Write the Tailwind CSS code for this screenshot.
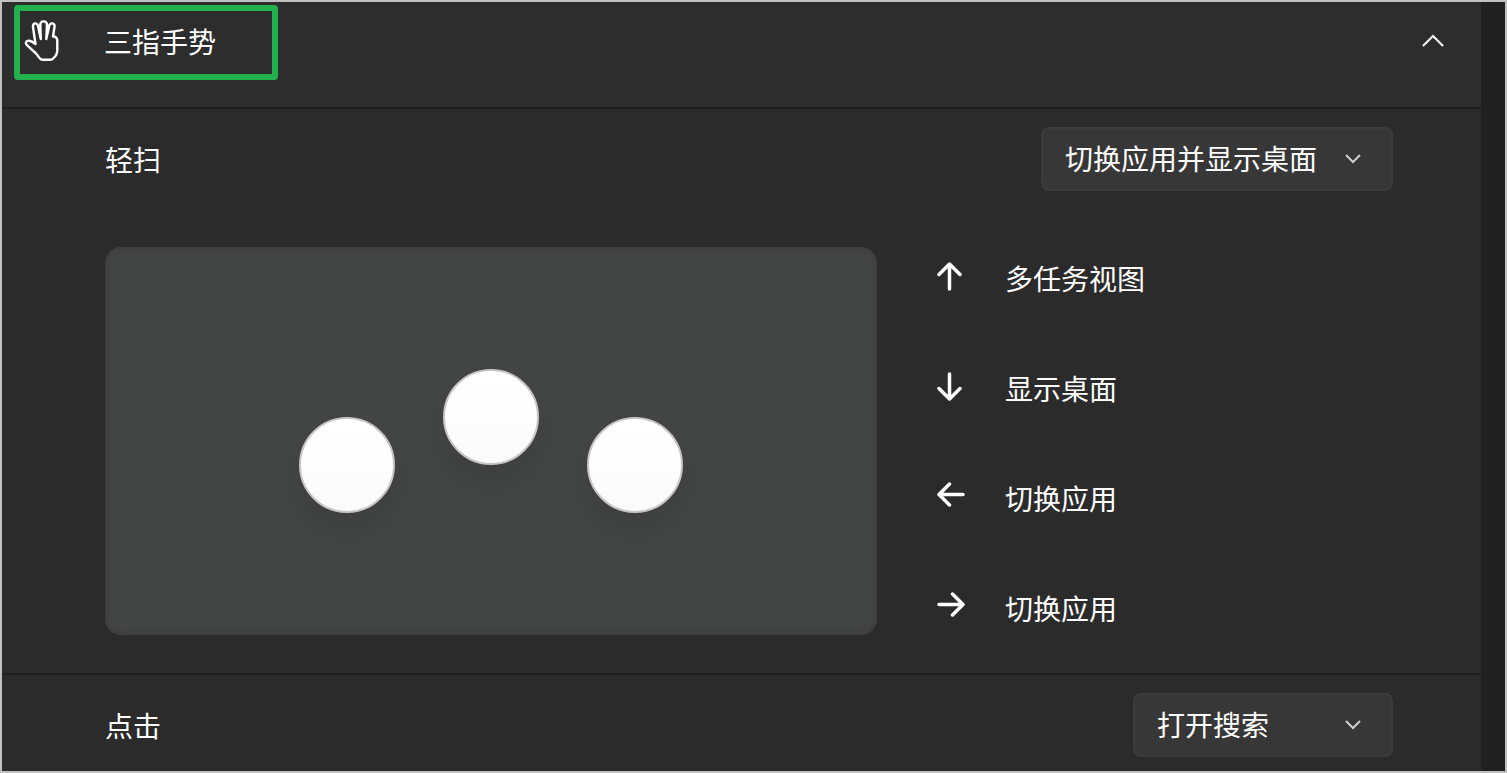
<!DOCTYPE html>
<html lang="zh-CN">
<head>
    <meta charset="UTF-8">
    <meta name="viewport" content="width=device-width, initial-scale=1.0">
    <title>三指手势</title>
    <script src="https://cdn.jsdelivr.net/npm/@tailwindcss/browser@4"></script>
</head>
<body class="bg-[#202020]">
    <div class="min-h-screen flex border-2 border-[#c0c0c0] bg-[#202020] pr-6 text-white text-[28px] leading-10 font-['Noto_Sans_CJK_SC',sans-serif]">
        <main class="flex-1 min-w-0 bg-[#2b2b2b]">
            <!-- Encabezado plegable -->
            <header class="border-b-2 border-[#1f1f1f] bg-[#2d2d2d]">
                <button type="button" aria-expanded="true" class="w-full h-[105px] pt-[3px] pl-3 pr-9 flex items-start justify-between text-left">
                    <span class="w-[264px] h-[75px] pl-1 pb-1 flex items-center gap-11 rounded-sm border-6 border-[#22b14c]">
                        <svg class="w-9 h-11 shrink-0" viewBox="0 0 36 44" fill="none" stroke="currentColor" stroke-width="2.4" stroke-linecap="round" stroke-linejoin="round">
                            <path d="M11.5 25L9 8C8.6 3.500 13.200 3.200 14 7L16.800 20L16.300 6C16.300 1.200 23 1.200 23 6L22.300 20L25.200 7C26 3.200 31 3.500 30.500 8L29 17.500C32 17.500 33.300 19.500 33.300 22V31C33.300 35 31.500 37.500 29.500 39.200Q28 40.800 26 40.800H19C17.500 40.800 16.500 40.300 15.500 39C14 37 13.500 36 12 34.500L3 26.200C0.800 24 2.500 21.200 5.500 21.700C7.500 22 9 23 11.500 25"/>
                        </svg>
                        <span>三指手势</span>
                    </span>
                    <svg class="w-6 h-6 mt-6" viewBox="0 0 24 24" fill="none" stroke="currentColor" stroke-width="2">
                        <path d="M2 17L12 7L22 17"/>
                    </svg>
                </button>
            </header>

            <!-- Deslizar -->
            <section class="pt-[18px] pb-[10px] pl-[103px] pr-[88px] border-b-2 border-[#1f1f1f]">
                <div class="flex items-center justify-between">
                    <label for="swipe">轻扫</label>
                    <div class="relative">
                        <select id="swipe" class="appearance-none w-[352px] h-16 pl-[22px] pr-16 pb-[2px] rounded-lg border-2 border-[#3c3c3c] bg-[#373737]">
                            <option>切换应用并显示桌面</option>
                        </select>
                        <svg class="absolute right-8 top-6 w-4 h-4 pointer-events-none" viewBox="0 0 16 16" fill="none" stroke="#cfcfcf" stroke-width="2">
                            <path d="M1 4L8 11L15 4"/>
                        </svg>
                    </div>
                </div>
                <div class="mt-8 flex items-center gap-[60px]">
                    <div class="flex-1 h-[388px] mb-1 flex items-center justify-center rounded-2xl bg-[#434544] inset-shadow-[0_0_6px_#383838]">
                        <div class="h-36 flex gap-12">
                            <span class="w-24 h-24 self-end rounded-full border-2 border-[#c5c5c5] bg-linear-to-b from-white to-[#fbfbfb] shadow-[0_16px_20px_rgba(0,0,0,0.08)]"></span>
                            <span class="w-24 h-24 rounded-full border-2 border-[#c5c5c5] bg-linear-to-b from-white to-[#fbfbfb] shadow-[0_16px_20px_rgba(0,0,0,0.08)]"></span>
                            <span class="w-24 h-24 self-end rounded-full border-2 border-[#c5c5c5] bg-linear-to-b from-white to-[#fbfbfb] shadow-[0_16px_20px_rgba(0,0,0,0.08)]"></span>
                        </div>
                    </div>
                    <ul class="w-[456px]">
                        <li class="h-[110px] flex items-center gap-10">
                            <svg class="w-7 h-8 shrink-0" viewBox="0 0 28 32" fill="none" stroke="currentColor" stroke-width="3.5" stroke-linecap="round" stroke-linejoin="round">
                                <path d="M12.500 27V2M2 12.500L12.500 2L23 12.500"/>
                            </svg>
                            <span>多任务视图</span>
                        </li>
                        <li class="h-[110px] flex items-center gap-10">
                            <svg class="w-7 h-8 shrink-0" viewBox="0 0 28 32" fill="none" stroke="currentColor" stroke-width="3.5" stroke-linecap="round" stroke-linejoin="round">
                                <path d="M12.500 2V27M2 16.500L12.500 27L23 16.500"/>
                            </svg>
                            <span>显示桌面</span>
                        </li>
                        <li class="h-[110px] flex items-center gap-10">
                            <svg class="w-7 h-8 shrink-0" viewBox="0 0 28 32" fill="none" stroke="currentColor" stroke-width="3.5" stroke-linecap="round" stroke-linejoin="round">
                                <path d="M26 12.500H2M12.500 2L2 12.500L12.500 23"/>
                            </svg>
                            <span>切换应用</span>
                        </li>
                        <li class="h-[110px] flex items-center gap-10">
                            <svg class="w-7 h-8 shrink-0" viewBox="0 0 28 32" fill="none" stroke="currentColor" stroke-width="3.5" stroke-linecap="round" stroke-linejoin="round">
                                <path d="M2 12.500H26M15.500 2L26 12.500L15.500 23"/>
                            </svg>
                            <span>切换应用</span>
                        </li>
                    </ul>
                </div>
            </section>

            <!-- Pulsar -->
            <section class="pt-[18px] pb-[14px] pl-[103px] pr-[88px] flex items-center justify-between">
                <label for="tap">点击</label>
                <div class="relative">
                    <select id="tap" class="appearance-none w-[260px] h-16 pl-[22px] pr-16 pb-[2px] rounded-lg border-2 border-[#3c3c3c] bg-[#373737]">
                        <option>打开搜索</option>
                    </select>
                    <svg class="absolute right-8 top-6 w-4 h-4 pointer-events-none" viewBox="0 0 16 16" fill="none" stroke="#cfcfcf" stroke-width="2">
                        <path d="M1 4L8 11L15 4"/>
                    </svg>
                </div>
            </section>
        </main>
    </div>
</body>
</html>
